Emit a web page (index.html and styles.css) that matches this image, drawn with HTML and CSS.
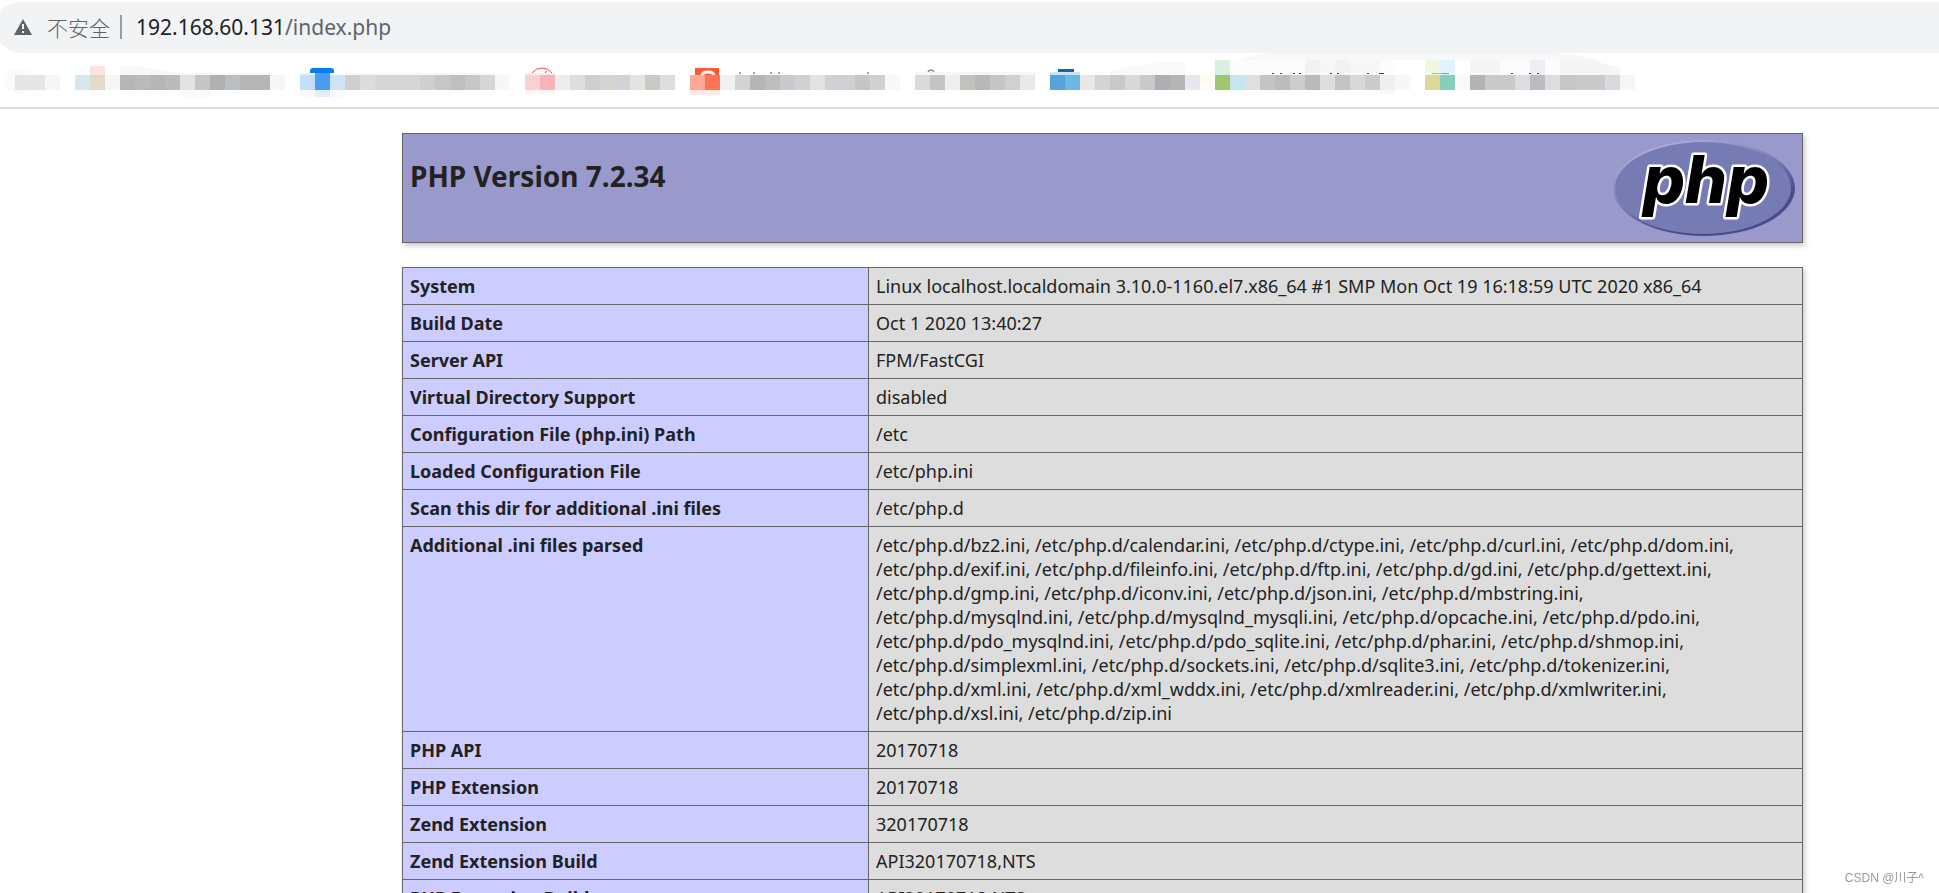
FILE: index.html
```html
<!DOCTYPE html>
<html lang="zh-CN">
<head>
<meta charset="utf-8">
<title>phpinfo()</title>
<link rel="stylesheet" href="styles.css">
</head>
<body>
<div class="window">
  <header class="browser">
    <div class="address">
      <svg class="address-icon" width="20" height="18" viewBox="0 0 20 18" aria-hidden="true"><path d="M10 1 19 17H1z" fill="#5f6368"/><path d="M9 6h2v5H9zM9 13h2v2H9z" fill="#f1f3f4"/></svg>
      <span class="address-state">不安全</span>
      <span class="address-rule"></span>
      <span class="address-url"><span class="address-host">192.168.60.131</span>/index.php</span>
    </div>
    <nav class="bookmarks" aria-label="Bookmarks">
      <svg width="60" height="50" viewBox="0 53 60 50"><path d="M15 69h15v24H20q-16-2-16-12t11-12z" fill="#fafafa"/><path d="M15 75h30v15H15z" fill="#e6e6e6"/><path d="M45 75h15v15H45z" fill="#f5f6f8"/></svg>
      <svg width="210" height="50" viewBox="75 53 210 50"><path d="M75 66h15v9H75z" fill="#f8fdfe"/><path d="M90 66h15v9H90z" fill="#f9e4e1"/><path d="M75 75h15v15H75z" fill="#d7e7f1"/><path d="M90 75h15v15H90z" fill="#e3dbc8"/><path d="M90 90h15v7H90z" fill="#fdfdfd"/><path d="M105 75h15v15h-15zM270 75h15v15h-15z" fill="#f6f6f6"/><path d="M120 66h15l45 7h90v2H120z" fill="#f7f7f7"/><path d="M120 75h150v15H120z" fill="#b5b6b6"/><path d="M135 75h15v15h-15zM165 75h15v15h-15z" fill="#bcbbbb"/><path d="M180 75h15v15h-15z" fill="#e1e3e4"/><path d="M195 75h15v15h-15z" fill="#c8c5c7"/><path d="M210 75h15v15h-15z" fill="#b0b0b0"/><path d="M225 75h15v15h-15z" fill="#babec1"/><path d="M180 90h30v7h-30z" fill="#fafafa"/></svg>
      <svg width="210" height="50" viewBox="300 53 210 50"><path d="M310 73v-2q0-3 3-3h18q3 0 3 3v2z" fill="#0a7cf0"/><path d="M300 75h15v15h-15z" fill="#c3dffa"/><path d="M300 73h10v2h-10z" fill="#e6f2fd"/><path d="M315 73h15v17h-15z" fill="#4b9bf2"/><path d="M330 75h15v15h-15z" fill="#cfe3fb"/><path d="M300 90h45v7h-45z" fill="#f7fbff"/><path d="M315 90h15v7h-15z" fill="#dfedfc"/><path d="M345 73h150v2H345z" fill="#f8f8f8"/><path d="M345 75h15v15h-15zM420 75h15v15h-15z" fill="#d1cecf"/><path d="M360 75h15v15h-15z" fill="#dbdddd"/><path d="M375 75h45v15h-45zM480 75h15v15h-15z" fill="#d5d6d7"/><path d="M435 75h15v15h-15zM465 75h15v15h-15z" fill="#c6c8c8"/><path d="M450 75h15v15h-15z" fill="#c1bebe"/><path d="M495 75h15v15h-15z" fill="#f7f7f7"/></svg>
      <svg width="150" height="50" viewBox="525 53 150 50"><path d="M532 73q4-5 10-5t10 5M545 73l2-2" fill="none" stroke="#e24652" stroke-width="1"/><path d="M525 73h30v2h-30z" fill="#fbecec"/><path d="M525 75h15v15h-15z" fill="#f9d1d3"/><path d="M540 75h15v15h-15z" fill="#f7b5b8"/><path d="M525 90h30v4h-30z" fill="#fef6f6"/><path d="M555 75h15v15h-15z" fill="#ececec"/><path d="M570 75h15v15h-15zM660 75h15v15h-15z" fill="#dddddf"/><path d="M585 75h15v15h-15z" fill="#cfcfcf"/><path d="M600 75h15v15h-15z" fill="#d5d4d1"/><path d="M615 75h15v15h-15z" fill="#d1d3d8"/><path d="M630 75h15v15h-15z" fill="#e4e4e4"/><path d="M645 75h15v15h-15z" fill="#cac9c4"/><path d="M585 90h30v4h-30z" fill="#fbfbfb"/></svg>
      <svg width="210" height="50" viewBox="690 53 210 50"><path d="M695 68h24v7h-24z" fill="#fe5932"/><path d="M702 75q1-3 6-3t6 3" fill="none" stroke="#fff" stroke-width="3"/><path d="M690 75h15v15h-15z" fill="#fea997"/><path d="M705 75h15v15h-15z" fill="#ff7553"/><path d="M690 90h30v5h-30z" fill="#ffe9e4"/><path d="M739 73h2M753 73h2M770 73h2M778 73h2M867 73h2" stroke="#444"/><path d="M720 75h15v15h-15z" fill="#f1efef"/><path d="M735 75h15v15h-15z" fill="#d2d4d4"/><path d="M750 75h15v15h-15z" fill="#b4b5b5"/><path d="M765 75h15v15h-15z" fill="#bfbcbd"/><path d="M780 75h15v15h-15z" fill="#c9cacd"/><path d="M795 75h15v15h-15zM825 75h30v15h-30zM870 75h15v15h-15z" fill="#d0d1d4"/><path d="M810 75h15v15h-15z" fill="#e4e3e1"/><path d="M855 75h15v15h-15z" fill="#c8c6c5"/><path d="M885 75h15v15h-15z" fill="#f8f8f8"/></svg>
      <svg width="120" height="50" viewBox="915 53 120 50"><path d="M928 72q0-2 3-2t3 2" fill="none" stroke="#555"/><path d="M915 72h120v3H915z" fill="#f6f6f6"/><path d="M915 75h15v15h-15z" fill="#dadada"/><path d="M930 75h15v15h-15z" fill="#c4c4c4"/><path d="M945 75h15v15h-15z" fill="#eeeeed"/><path d="M960 75h15v15h-15z" fill="#c2c1be"/><path d="M975 75h15v15h-15z" fill="#b7b8ba"/><path d="M990 75h15v15h-15z" fill="#c6c4c5"/><path d="M1005 75h15v15h-15z" fill="#d0d0d1"/><path d="M1020 75h15v15h-15z" fill="#e9e9eb"/><path d="M915 90h30v4h-30z" fill="#fcfcfc"/></svg>
      <svg width="150" height="50" viewBox="1050 53 150 50"><path d="M1058 69h16v3h-16z" fill="#1264b4"/><path d="M1050 72h30v3h-30z" fill="#cae4f3"/><path d="M1050 75h15v15h-15z" fill="#57a2da"/><path d="M1065 75h15v15h-15z" fill="#6cb7e5"/><path d="M1110 70l55-9h20v14h-75z" fill="#f9f9f9"/><path d="M1080 75h15v15h-15z" fill="#e9e8e6"/><path d="M1095 75h15v15h-15z" fill="#d4d4d6"/><path d="M1110 75h15v15h-15zM1140 75h15v15h-15z" fill="#cbc8c9"/><path d="M1125 75h15v15h-15z" fill="#d8d8d9"/><path d="M1155 75h15v15h-15z" fill="#adaeb3"/><path d="M1170 75h15v15h-15z" fill="#b5b5b5"/><path d="M1185 75h15v15h-15z" fill="#e7e8ed"/></svg>
      <svg width="195" height="50" viewBox="1215 53 195 50"><path d="M1240 60q12-5 30-7h155v7z" fill="#f7f8fa"/><path d="M1230 60h165v15h-165z" fill="#fbfcfb"/><path d="M1305 60h15v15h-15zM1335 60h15v15h-15z" fill="#f2f2f2"/><path d="M1320 60h15v15h-15zM1350 60h30v15h-30z" fill="#f7f7f6"/><path d="M1200 75h15v15h-15z" fill="#fffaf3"/><path d="M1215 60h15v15h-15z" fill="#d8efe1"/><path d="M1215 75h15v15h-15z" fill="#9fc56e"/><path d="M1230 75h15v15h-15z" fill="#c5e6ef"/><path d="M1240 73.500h145" stroke="#fff"/><path d="M1272 73.500h2M1280 73.500h2M1293 73.500h2M1299 73.500h2M1330 73.500h2M1337 73.500h2M1367 73.500h2M1379 73.500h5" stroke="#444"/><path d="M1245 75h15v15h-15z" fill="#e0dfdf"/><path d="M1260 75h15v15h-15zM1335 75h15v15h-15z" fill="#c4c4c4"/><path d="M1275 75h15v15h-15z" fill="#bebbbc"/><path d="M1290 75h15v15h-15z" fill="#caced1"/><path d="M1305 75h15v15h-15z" fill="#bababa"/><path d="M1320 75h15v15h-15z" fill="#dedede"/><path d="M1350 75h15v15h-15z" fill="#d8d8d9"/><path d="M1365 75h15v15h-15z" fill="#cbcbca"/><path d="M1380 75h15v15h-15z" fill="#efefef"/><path d="M1395 75h15v15h-15z" fill="#f6f7f9"/><path d="M1380 90h15v4h-15z" fill="#f8f8f8"/></svg>
      <svg width="210" height="50" viewBox="1425 53 210 50"><path d="M1410 60v-7h145q30 2 47 9z" fill="#f7f8fa"/><path d="M1470 60h120l30 8v7h-150z" fill="#f5f5f6"/><path d="M1500 60h30v15h-30zM1545 60h15v15h-15z" fill="#fbfcfb"/><path d="M1530 60h15v15h-15z" fill="#eeeff2"/><path d="M1425 60h15v15h-15z" fill="#f0f8e4"/><path d="M1440 60h15v15h-15z" fill="#e0f4f9"/><path d="M1425 73.500h130" stroke="#fff"/><path d="M1432 73.500h5" stroke="#f4a51c"/><path d="M1437 73.500h5" stroke="#a8dc3a"/><path d="M1442 73.500h7" stroke="#3bb9e8"/><path d="M1511 73.500h2M1529 73.500h2M1537 73.500h2" stroke="#444"/><path d="M1425 75h15v15h-15z" fill="#dcd998"/><path d="M1440 75h15v15h-15z" fill="#87cfba"/><path d="M1455 75h15v15h-15z" fill="#f9f9f9"/><path d="M1470 75h15v15h-15z" fill="#b3b3b5"/><path d="M1485 75h30v15h-30zM1575 75h30v15h-30z" fill="#cbc9c9"/><path d="M1515 75h15v15h-15zM1545 75h15v15h-15z" fill="#dddddf"/><path d="M1530 75h15v15h-15z" fill="#bbbcc1"/><path d="M1560 75h15v15h-15z" fill="#c6c7ca"/><path d="M1605 75h15v15h-15z" fill="#d9dae0"/><path d="M1620 75h15v15h-15z" fill="#f6f6f6"/></svg>
    </nav>
  </header>

  <main class="phpinfo">
    <div class="banner">
      <h1>PHP Version 7.2.34</h1>
      <svg class="logo" width="182" height="96" viewBox="0 0 182 96" role="img" aria-label="PHP logo">
        <defs>
          <linearGradient id="rim" x1="0.2" y1="0" x2="0.8" y2="1">
            <stop offset="0" stop-color="#b4b7de"/>
            <stop offset="0.45" stop-color="#777bb3"/>
            <stop offset="0.75" stop-color="#484a8e"/>
          </linearGradient>
        </defs>
        <ellipse cx="91" cy="48" rx="91" ry="48" fill="url(#rim)"/>
        <ellipse cx="90" cy="48" rx="88" ry="46" fill="#777bb3"/>
        <text class="logo-text" x="93" y="63" text-anchor="middle">php</text>
      </svg>
    </div>

    <table class="info">
      <colgroup><col class="col-key"><col></colgroup>
      <tbody>
        <tr><th scope="row">System</th><td>Linux localhost.localdomain 3.10.0-1160.el7.x86_64 #1 SMP Mon Oct 19 16:18:59 UTC 2020 x86_64</td></tr>
        <tr><th scope="row">Build Date</th><td>Oct 1 2020 13:40:27</td></tr>
        <tr><th scope="row">Server API</th><td>FPM/FastCGI</td></tr>
        <tr><th scope="row">Virtual Directory Support</th><td>disabled</td></tr>
        <tr><th scope="row">Configuration File (php.ini) Path</th><td>/etc</td></tr>
        <tr><th scope="row">Loaded Configuration File</th><td>/etc/php.ini</td></tr>
        <tr><th scope="row">Scan this dir for additional .ini files</th><td>/etc/php.d</td></tr>
        <tr><th scope="row">Additional .ini files parsed</th><td>/etc/php.d/bz2.ini, /etc/php.d/calendar.ini, /etc/php.d/ctype.ini, /etc/php.d/curl.ini, /etc/php.d/dom.ini,<br>
/etc/php.d/exif.ini, /etc/php.d/fileinfo.ini, /etc/php.d/ftp.ini, /etc/php.d/gd.ini, /etc/php.d/gettext.ini,<br>
/etc/php.d/gmp.ini, /etc/php.d/iconv.ini, /etc/php.d/json.ini, /etc/php.d/mbstring.ini,<br>
/etc/php.d/mysqlnd.ini, /etc/php.d/mysqlnd_mysqli.ini, /etc/php.d/opcache.ini, /etc/php.d/pdo.ini,<br>
/etc/php.d/pdo_mysqlnd.ini, /etc/php.d/pdo_sqlite.ini, /etc/php.d/phar.ini, /etc/php.d/shmop.ini,<br>
/etc/php.d/simplexml.ini, /etc/php.d/sockets.ini, /etc/php.d/sqlite3.ini, /etc/php.d/tokenizer.ini,<br>
/etc/php.d/xml.ini, /etc/php.d/xml_wddx.ini, /etc/php.d/xmlreader.ini, /etc/php.d/xmlwriter.ini,<br>
/etc/php.d/xsl.ini, /etc/php.d/zip.ini</td></tr>
        <tr><th scope="row">PHP API</th><td>20170718</td></tr>
        <tr><th scope="row">PHP Extension</th><td>20170718</td></tr>
        <tr><th scope="row">Zend Extension</th><td>320170718</td></tr>
        <tr><th scope="row">Zend Extension Build</th><td>API320170718,NTS</td></tr>
        <tr><th scope="row">PHP Extension Build</th><td>API20170718,NTS</td></tr>
      </tbody>
    </table>
  </main>
  <div class="watermark">CSDN @川子^</div>
</div>
</body>
</html>
```

FILE: styles.css
```css
* {
  box-sizing: border-box;
}

body {
  margin: 0;
  background: #fff;
  color: #222;
  font-family: "Noto Sans", "Noto Sans CJK SC", sans-serif;
  font-size: 18px;
  line-height: 24px;
}

.window {
  height: 100vh;
  overflow: hidden;
}

.browser {
  padding-top: 2px;
  border-bottom: 2px solid #dadada;
}

.address {
  display: flex;
  align-items: center;
  height: 51px;
  margin-left: -5px;
  padding: 0 0 2px 18px;
  border-radius: 26px 0 0 26px;
  background: #f1f3f4;
  color: #5f6368;
  font-size: 21px;
}

.address-icon {
  margin-right: 14px;
}

.address-state {
  font-family: "Noto Sans CJK SC", sans-serif;
  font-weight: 300;
}

.address-rule {
  width: 2px;
  height: 24px;
  margin: 0 14px 0 10px;
  background: #9a9da1;
}

.address-host {
  color: #202124;
}

.bookmarks {
  display: flex;
  gap: 15px;
  height: 54px;
}

.bookmarks svg {
  flex: none;
  overflow: visible;
}

.phpinfo {
  padding: 24px 136px 0 402px;
}

.banner {
  display: flex;
  justify-content: space-between;
  margin-bottom: 24px;
  padding: 6px 7px;
  border: 1px solid #666;
  background: #99c;
  box-shadow: 2px 3px 5px #ccc;
}

.banner h1 {
  margin: 18px 0 0;
  font-size: 28px;
  font-weight: 700;
  line-height: 36px;
}

.logo {
  overflow: visible;
}

.logo-text {
  fill: #000;
  stroke: #fff;
  stroke-width: 5px;
  stroke-linejoin: round;
  paint-order: stroke;
  font-family: Inter, sans-serif;
  font-size: 66px;
  font-style: italic;
  font-weight: 800;
}

.info {
  width: 100%;
  border-collapse: collapse;
  box-shadow: 2px 3px 5px #ccc;
}

.col-key {
  width: 466px;
}

.info th,
.info td {
  padding: 6px 7px;
  border: 1px solid #666;
  text-align: left;
  vertical-align: top;
}

.info th {
  background: #ccf;
  font-weight: 700;
}

.info td {
  background: #ddd;
}

.watermark {
  position: fixed;
  right: 15px;
  bottom: 6px;
  color: #999;
  font-family: "Liberation Sans", "Noto Sans CJK SC", sans-serif;
  font-size: 12px;
  line-height: 18px;
}
```
